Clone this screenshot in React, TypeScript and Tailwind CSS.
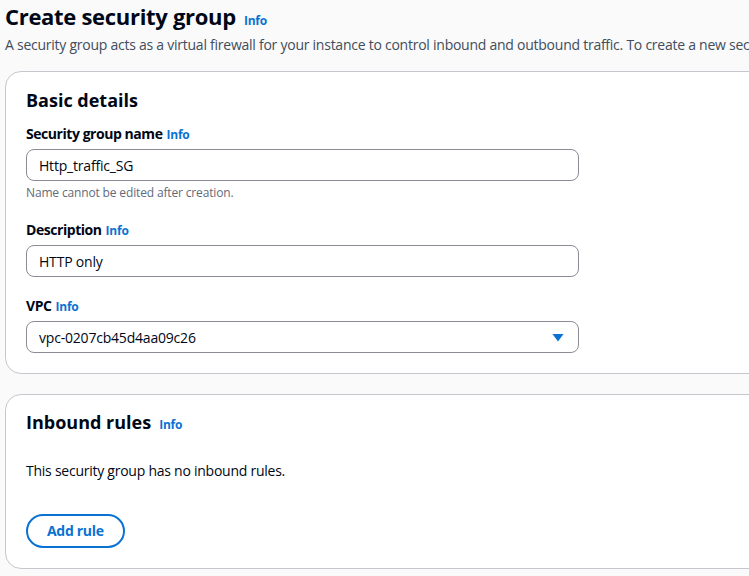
import React from 'react';

function Info({ className = '' }: { className?: string }) {
  return <span className={`text-[12px] font-bold tracking-[-0.2px] text-[#0972d3] ${className}`}>Info</span>;
}

function Field({ label, children, hint }: { label: string; children: React.ReactNode; hint?: string }) {
  return (
    <div className="flex flex-col">
      <div className="flex items-baseline gap-1 text-[14px] font-bold leading-[20px] tracking-[-0.45px] text-[#000716]">
        {label} <Info />
      </div>
      <div className="mt-[4px]">{children}</div>
      {hint && <div className="mt-[4px] text-[12px] leading-[16px] tracking-[-0.15px] text-[#5f6b7a]">{hint}</div>}
    </div>
  );
}

function TextBox({ value, select }: { value: string; select?: boolean }) {
  return (
    <div className="flex h-[32px] w-[553px] items-center justify-between rounded-[8px] border border-[#8c8c94] bg-white pl-[12px] pr-[14px] text-[14px] tracking-[-0.2px] text-[#000716]">
      <span>{value}</span>
      {select && (
        <svg width="12" height="9" viewBox="0 0 12 9">
          <path d="M0.5 1h11L6 8.5z" fill="#0972d3" />
        </svg>
      )}
    </div>
  );
}

export default function App() {
  return (
    <div className="min-h-[576px] w-[749px] overflow-hidden bg-[#fafafa] pl-[5px] font-['Open_Sans',sans-serif] text-[#000716]">
      <div className="flex items-baseline gap-[8px] pt-[1px]">
        <h1 className="text-[22px] font-bold leading-[30px] tracking-[-0.3px]">Create security group</h1>
        <Info />
      </div>
      <p className="mt-[4px] whitespace-nowrap text-[14px] leading-[20px] tracking-[-0.25px] text-[#414d5c]">
        A security group acts as a virtual firewall for your instance to control inbound and outbound traffic. To create a new security group, complete the fields below.
      </p>

      <section className="mt-[16px] w-[780px] rounded-[16px] border border-[#c6c6cd] bg-white px-[20px] pb-[20px] pt-[16px]">
        <h2 className="text-[18px] font-bold leading-[24px]">Basic details</h2>
        <div className="mt-[12px] flex flex-col gap-[19px]">
          <Field label="Security group name" hint="Name cannot be edited after creation.">
            <TextBox value="Http_traffic_SG" />
          </Field>
          <Field label="Description">
            <TextBox value="HTTP only" />
          </Field>
          <Field label="VPC">
            <TextBox value="vpc-0207cb45d4aa09c26" select />
          </Field>
        </div>
      </section>

      <section className="mt-[20px] w-[780px] rounded-[16px] border border-[#c6c6cd] bg-white px-[20px] pb-[20px] pt-[15px]">
        <div className="flex items-baseline gap-[8px]">
          <h2 className="text-[18px] font-bold leading-[24px]">Inbound rules</h2>
          <Info />
        </div>
        <p className="mt-[27px] text-[14px] leading-[20px] tracking-[-0.25px]">This security group has no inbound rules.</p>
        <button className="mt-[33px] rounded-full border-2 border-[#0972d3] px-[19px] py-[5px] text-[14px] font-bold leading-[20px] tracking-[-0.3px] text-[#0972d3]">
          Add rule
        </button>
      </section>
    </div>
  );
}
